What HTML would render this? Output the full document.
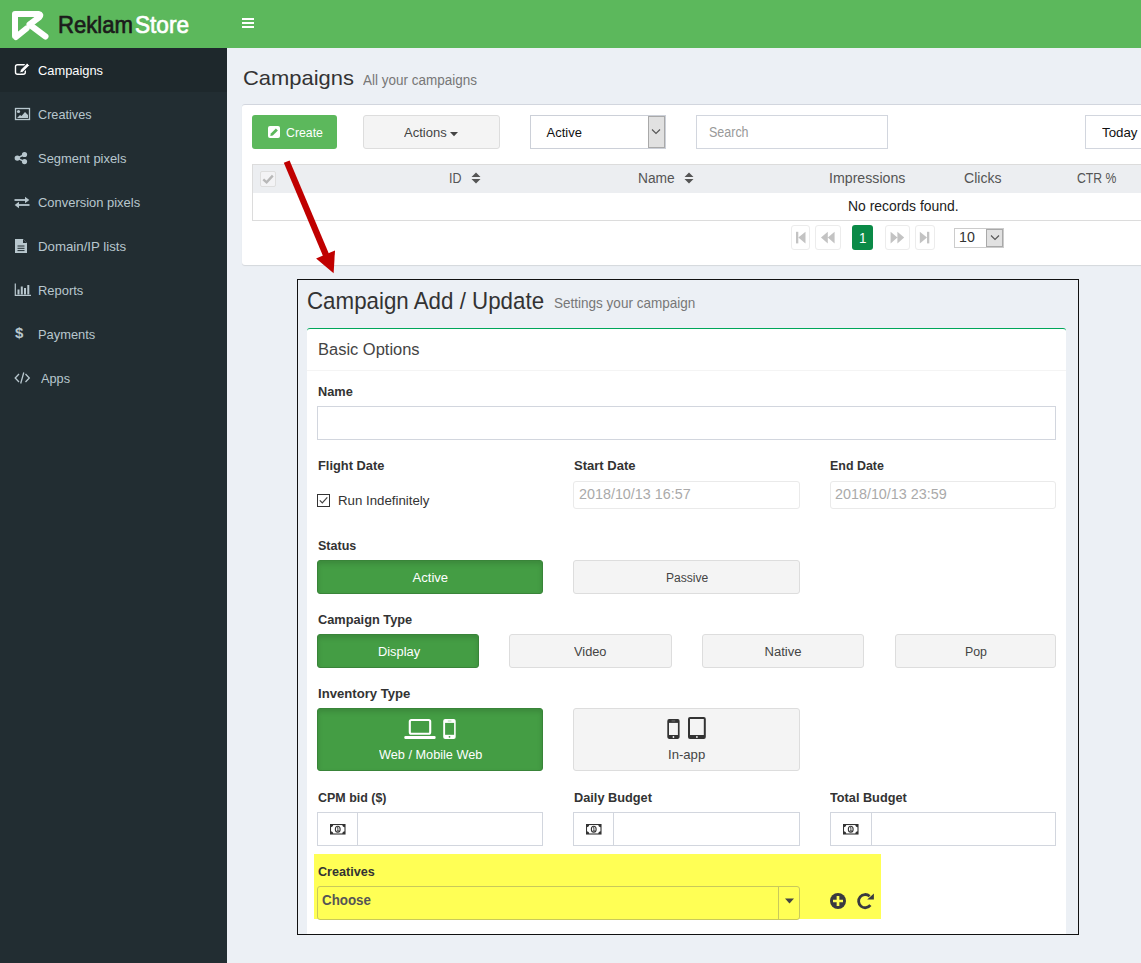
<!DOCTYPE html>
<html><head><meta charset="utf-8"><title>ReklamStore</title>
<style>
html,body{margin:0;padding:0;width:1141px;height:963px;overflow:hidden;background:#ecf0f5;font-family:"Liberation Sans",sans-serif;}
.b{position:absolute;}
.t{position:absolute;white-space:nowrap;transform-origin:0 0;}
</style></head><body>
<div class="b" style="left:0.00px;top:0.00px;width:1141.00px;height:48.00px;background:#5cb85c"></div>
<div class="b" style="left:0.00px;top:48.00px;width:227.00px;height:915.00px;background:#222d32"></div>
<div class="b" style="left:0.00px;top:48.00px;width:227.00px;height:44.00px;background:#1e282c"></div>
<div class="b" style="left:227.00px;top:48.00px;width:914.00px;height:915.00px;background:#ecf0f5"></div>
<svg class="b" style="left:10.00px;top:9.00px" width="40" height="32" viewBox="0 0 40 32"><path d="M5 27 L5 5 L28.5 5 Q31.5 5.5 29.5 8 L19.5 15.5 L35.5 27.5 M6 28 L16.5 19.5" stroke="#fff" stroke-width="6" stroke-linecap="round" stroke-linejoin="round" fill="none"/></svg>
<div class="t" style="left:57.50px;top:11.76px;font-size:24.13px;line-height:26.95px;color:#1b1b1b;transform:scaleX(0.9170);-webkit-text-stroke:0.7px #1b1b1b;">Reklam</div>
<div class="t" style="left:134.50px;top:11.76px;font-size:24.13px;line-height:26.95px;color:#fff;transform:scaleX(0.9363);-webkit-text-stroke:0.7px #fff;">Store</div>
<div class="b" style="left:242.00px;top:18.00px;width:12.00px;height:2.00px;background:#fff"></div>
<div class="b" style="left:242.00px;top:22.00px;width:12.00px;height:2.00px;background:#fff"></div>
<div class="b" style="left:242.00px;top:26.00px;width:12.00px;height:2.00px;background:#fff"></div>
<div class="t" style="left:38.00px;top:63.89px;font-size:12.94px;line-height:14.45px;color:#fff;transform:scaleX(0.9934);">Campaigns</div>
<div class="t" style="left:38.00px;top:107.89px;font-size:12.94px;line-height:14.45px;color:#b8c7ce;transform:scaleX(0.9792);">Creatives</div>
<div class="t" style="left:38.00px;top:151.89px;font-size:12.94px;line-height:14.45px;color:#b8c7ce;">Segment pixels</div>
<div class="t" style="left:38.00px;top:195.89px;font-size:12.94px;line-height:14.45px;color:#b8c7ce;">Conversion pixels</div>
<div class="t" style="left:38.00px;top:239.89px;font-size:12.94px;line-height:14.45px;color:#b8c7ce;transform:scaleX(1.0240);">Domain/IP lists</div>
<div class="t" style="left:38.00px;top:283.89px;font-size:12.94px;line-height:14.45px;color:#b8c7ce;">Reports</div>
<div class="t" style="left:38.00px;top:327.89px;font-size:12.94px;line-height:14.45px;color:#b8c7ce;transform:scaleX(0.9945);">Payments</div>
<div class="t" style="left:40.70px;top:371.89px;font-size:12.94px;line-height:14.45px;color:#b8c7ce;transform:scaleX(0.9835);">Apps</div>
<svg class="b" style="left:13.00px;top:62.00px" width="18" height="15" viewBox="0 0 18 15"><path d="M11.8 2.7 L4.5 2.7 Q2.5 2.7 2.5 4.7 L2.5 10.3 Q2.5 12.3 4.5 12.3 L10.3 12.3 Q12.3 12.3 12.3 10.3 L12.3 8.5" fill="none" stroke="#fff" stroke-width="1.4"/><path d="M6.6 11 L7.4 7.9 L14.2 1.1 L16.5 3.4 L9.7 10.2 Z" fill="#fff" stroke="#1e282c" stroke-width="0.9"/></svg>
<svg class="b" style="left:14.00px;top:107.00px" width="17" height="14" viewBox="0 0 17 14"><rect x="1.5" y="1.5" width="14" height="11" fill="none" stroke="#b8c7ce" stroke-width="1.3"/><circle cx="4.5" cy="4.5" r="1.6" fill="#b8c7ce"/><path d="M3 11 L6 8 L7.5 9 L11 5 L14 8 L14 11 Z" fill="#b8c7ce"/></svg>
<svg class="b" style="left:13.00px;top:151.00px" width="16" height="15" viewBox="0 0 16 15"><path d="M4.3 7.1 L11.5 3.5 M4.3 7.1 L11.5 10.6" stroke="#b8c7ce" stroke-width="1.6"/><circle cx="4.3" cy="7.1" r="2.7" fill="#b8c7ce"/><circle cx="11.5" cy="3.5" r="2.6" fill="#b8c7ce"/><circle cx="11.5" cy="10.6" r="2.6" fill="#b8c7ce"/></svg>
<svg class="b" style="left:14.00px;top:196.00px" width="17" height="13" viewBox="0 0 17 13"><path d="M0.5 4 L12 4" stroke="#b8c7ce" stroke-width="1.8"/><path d="M11 0.8 L15.3 4 L11 7.2 Z" fill="#b8c7ce"/><path d="M15.5 9 L4 9" stroke="#b8c7ce" stroke-width="1.8"/><path d="M5 5.8 L0.7 9 L5 12.2 Z" fill="#b8c7ce"/></svg>
<svg class="b" style="left:14.00px;top:238.00px" width="14" height="16" viewBox="0 0 14 16"><path d="M1 1 L9 1 L13 5 L13 15 L1 15 Z" fill="#b8c7ce"/><path d="M9 1 L9 5 L13 5" fill="#222d32"/><path d="M3.5 8 L10.5 8 M3.5 10.3 L10.5 10.3 M3.5 12.6 L10.5 12.6" stroke="#222d32" stroke-width="1"/></svg>
<svg class="b" style="left:14.00px;top:283.00px" width="18" height="14" viewBox="0 0 18 14"><path d="M1.3 0.5 L1.3 12.3 L17 12.3" stroke="#b8c7ce" stroke-width="1.2" fill="none"/><rect x="3.5" y="6.5" width="2" height="5" fill="#b8c7ce"/><rect x="6.8" y="3.5" width="2" height="8" fill="#b8c7ce"/><rect x="10" y="5" width="2" height="6.5" fill="#b8c7ce"/><rect x="13.3" y="2" width="2" height="9.5" fill="#b8c7ce"/></svg>
<div class="t" style="left:15px;top:323.8px;font-size:15px;line-height:18px;color:#b8c7ce;font-weight:bold">$</div>
<svg class="b" style="left:14.00px;top:371.00px" width="17" height="14" viewBox="0 0 17 14"><path d="M5 3 L1.2 7 L5 11 M11.5 3 L15.3 7 L11.5 11 M9.8 1.5 L6.7 12.5" stroke="#b8c7ce" stroke-width="1.3" fill="none"/></svg>
<div class="t" style="left:243.00px;top:66.32px;font-size:20.64px;line-height:23.05px;color:#333;transform:scaleX(1.0632);">Campaigns</div>
<div class="t" style="left:363.00px;top:70.74px;font-size:15.20px;line-height:16.98px;color:#777;transform:scaleX(0.8877);">All your campaigns</div>
<div class="b" style="left:242.00px;top:104.00px;width:903.00px;height:161.00px;box-sizing:border-box;background:#fff;border-top:1px solid #d2d6de;border-radius:3px;box-shadow:0 1px 1px rgba(0,0,0,0.1)"></div>
<div class="b" style="left:252.00px;top:115.00px;width:85.00px;height:34.00px;background:#5cb85c;border-radius:3px"></div>
<svg class="b" style="left:268.00px;top:126.00px" width="12" height="12" viewBox="0 0 12 12"><rect x="0" y="0" width="12" height="12" rx="2" fill="#fff"/><path d="M2.3 10 L2.8 7.6 L7.9 2.5 L9.9 4.5 L4.8 9.6 Z" fill="#5cb85c"/></svg>
<div class="t" style="left:286.30px;top:126.09px;font-size:12.94px;line-height:14.45px;color:#fff;transform:scaleX(0.9503);">Create</div>
<div class="b" style="left:363.00px;top:115.00px;width:137.00px;height:34.00px;background:#f4f4f4;border:1px solid #ddd;border-radius:3px;box-sizing:border-box"></div>
<div class="t" style="left:404.30px;top:126.12px;font-size:12.79px;line-height:14.29px;color:#444;transform:scaleX(1.0180);">Actions</div>
<svg class="b" style="left:450.00px;top:132.00px" width="8" height="4.5" viewBox="0 0 8 4.5"><path d="M0 0 L8 0 L4 4.3 Z" fill="#444"/></svg>
<div class="b" style="left:530.00px;top:115.00px;width:136.00px;height:34.00px;background:#fff;border:1px solid #ccd0d8;box-sizing:border-box"></div>
<div class="b" style="left:648.00px;top:116.00px;width:17.00px;height:32.00px;background:#e1e1e1;border:1px solid #a9a9a9;box-sizing:border-box"></div>
<svg class="b" style="left:651.00px;top:128.00px" width="10" height="7" viewBox="0 0 10 7"><path d="M1 1.5 L5 5.5 L9 1.5" stroke="#555" stroke-width="1.1" fill="none"/></svg>
<div class="t" style="left:546.60px;top:126.19px;font-size:12.94px;line-height:14.45px;color:#111;">Active</div>
<div class="b" style="left:696.00px;top:115.00px;width:192.00px;height:34.00px;background:#fff;border:1px solid #d2d6de;box-sizing:border-box"></div>
<div class="t" style="left:709.30px;top:125.05px;font-size:13.81px;line-height:15.42px;color:#999;transform:scaleX(0.9051);">Search</div>
<div class="b" style="left:1085.00px;top:115.00px;width:75.00px;height:34.00px;background:#fff;border:1px solid #d2d6de;box-sizing:border-box"></div>
<div class="t" style="left:1102.20px;top:125.70px;font-size:13.37px;line-height:14.94px;color:#111;transform:scaleX(0.9949);">Today</div>
<div class="b" style="left:252.00px;top:164.00px;width:908.00px;height:57.00px;border:1px solid #dcdcdc;box-sizing:border-box;background:#fff"></div>
<div class="b" style="left:253.00px;top:165.00px;width:907.00px;height:27.50px;background:#eceef1"></div>
<div class="b" style="left:260.00px;top:171.00px;width:16.00px;height:16.00px;background:#f3f3f5;border:1px solid #dedede;border-radius:2px;box-sizing:border-box"></div>
<svg class="b" style="left:262.00px;top:173.00px" width="12" height="12" viewBox="0 0 12 12"><path d="M1.3 6.3 L4.6 9.4 L10.8 2.6" stroke="#b8b8b8" stroke-width="2.4" fill="none"/></svg>
<div class="t" style="left:449.00px;top:171.37px;font-size:13.95px;line-height:15.59px;color:#555;transform:scaleX(0.8958);">ID</div>
<div class="t" style="left:637.50px;top:171.37px;font-size:13.95px;line-height:15.59px;color:#555;transform:scaleX(0.9887);">Name</div>
<div class="t" style="left:829.30px;top:171.37px;font-size:13.95px;line-height:15.59px;color:#555;transform:scaleX(1.0170);">Impressions</div>
<div class="t" style="left:963.50px;top:171.37px;font-size:13.95px;line-height:15.59px;color:#555;transform:scaleX(1.0079);">Clicks</div>
<div class="t" style="left:1076.90px;top:171.37px;font-size:13.95px;line-height:15.59px;color:#555;transform:scaleX(0.8763);">CTR %</div>
<svg class="b" style="left:471.30px;top:172.00px" width="10" height="12" viewBox="0 0 10 12"><path d="M0.5 5 L5 0.5 L9.5 5 Z M0.5 7 L5 11.5 L9.5 7 Z" fill="#555"/></svg>
<svg class="b" style="left:684.20px;top:172.00px" width="10" height="12" viewBox="0 0 10 12"><path d="M0.5 5 L5 0.5 L9.5 5 Z M0.5 7 L5 11.5 L9.5 7 Z" fill="#555"/></svg>
<div class="t" style="left:848.10px;top:199.24px;font-size:14.10px;line-height:15.75px;color:#212121;transform:scaleX(0.9869);">No records found.</div>
<div class="b" style="left:790.50px;top:225.00px;width:19.00px;height:24.50px;border:1px solid #ececec;border-radius:3px;box-sizing:border-box;background:#fff"></div>
<svg class="b" style="left:790.50px;top:225.00px" width="19" height="24.5" viewBox="0 0 19 24.5"><rect x="5" y="6.8" width="2.3" height="11.6" fill="#c3c3c3"/><path d="M14.5 6.8 L7.3 12.6 L14.5 18.4 Z" fill="#c3c3c3"/></svg>
<div class="b" style="left:815.30px;top:225.00px;width:25.30px;height:24.50px;border:1px solid #ececec;border-radius:3px;box-sizing:border-box;background:#fff"></div>
<svg class="b" style="left:815.30px;top:225.00px" width="25.3" height="24.5" viewBox="0 0 25.3 24.5"><path d="M12.8 6.8 L6 12.6 L12.8 18.4 Z M19.6 6.8 L12.8 12.6 L19.6 18.4 Z" fill="#c3c3c3"/></svg>
<div class="b" style="left:852.00px;top:225.00px;width:21.00px;height:24.50px;background:#0a8a47;border-radius:3px"></div>
<div class="t" style="left:858.50px;top:228.69px;font-size:15.26px;line-height:17.05px;color:#fff;transform:scaleX(0.8836);">1</div>
<div class="b" style="left:884.50px;top:225.00px;width:25.00px;height:24.50px;border:1px solid #ececec;border-radius:3px;box-sizing:border-box;background:#fff"></div>
<svg class="b" style="left:884.50px;top:225.00px" width="25" height="24.5" viewBox="0 0 25 24.5"><path d="M5.6 6.8 L12.4 12.6 L5.6 18.4 Z M12.4 6.8 L19.2 12.6 L12.4 18.4 Z" fill="#c3c3c3"/></svg>
<div class="b" style="left:915.30px;top:225.00px;width:19.30px;height:24.50px;border:1px solid #ececec;border-radius:3px;box-sizing:border-box;background:#fff"></div>
<svg class="b" style="left:915.30px;top:225.00px" width="19.3" height="24.5" viewBox="0 0 19.3 24.5"><path d="M4.8 6.8 L12 12.6 L4.8 18.4 Z" fill="#c3c3c3"/><rect x="12" y="6.8" width="2.3" height="11.6" fill="#c3c3c3"/></svg>
<div class="b" style="left:954.00px;top:227.50px;width:50.00px;height:20.50px;background:#fff;border:1px solid #ccc;box-sizing:border-box"></div>
<div class="b" style="left:986.00px;top:228.50px;width:17.00px;height:18.50px;background:#e1e1e1;border:1px solid #a9a9a9;box-sizing:border-box"></div>
<svg class="b" style="left:989.50px;top:233.50px" width="10" height="7" viewBox="0 0 10 7"><path d="M1 1.5 L5 5.5 L9 1.5" stroke="#555" stroke-width="1.1" fill="none"/></svg>
<div class="t" style="left:958.80px;top:228.49px;font-size:15.26px;line-height:17.05px;color:#333;transform:scaleX(0.9307);">10</div>
<svg class="b" style="left:270.00px;top:150.00px" width="80" height="130" viewBox="0 0 80 130"><path d="M16.7 11.6 L56 105" stroke="#c00000" stroke-width="6.3" fill="none"/><path d="M46.1 108.4 L65 100.4 L63.6 123.3 Z" fill="#c00000"/></svg>
<div class="b" style="left:297.00px;top:279.00px;width:782.30px;height:656.00px;border:1.7px solid #111;box-sizing:border-box;background:#ecf0f5"></div>
<div class="t" style="left:307.20px;top:288.15px;font-size:23.26px;line-height:25.98px;color:#333;transform:scaleX(0.9602);">Campaign Add / Update</div>
<div class="t" style="left:554.00px;top:295.18px;font-size:15.00px;line-height:16.75px;color:#777;transform:scaleX(0.9014);">Settings your campaign</div>
<div class="b" style="left:307.00px;top:328.00px;width:759.00px;height:605.30px;background:#fff;border-top:1.6px solid #00a65a;border-radius:3px 3px 0 0"></div>
<div class="b" style="left:307.00px;top:370.00px;width:759.00px;height:1.00px;background:#f4f4f4"></div>
<div class="t" style="left:317.70px;top:340.25px;font-size:17.30px;line-height:19.32px;color:#444;transform:scaleX(0.9530);">Basic Options</div>
<div class="t" style="left:317.70px;top:385.19px;font-size:12.94px;line-height:14.45px;color:#333;font-weight:bold;transform:scaleX(0.9877);">Name</div>
<div class="b" style="left:317.00px;top:406.00px;width:739.00px;height:34.00px;border:1px solid #d2d6de;box-sizing:border-box"></div>
<div class="t" style="left:317.60px;top:459.19px;font-size:12.94px;line-height:14.45px;color:#333;font-weight:bold;transform:scaleX(0.9935);">Flight Date</div>
<div class="t" style="left:573.60px;top:459.19px;font-size:12.94px;line-height:14.45px;color:#333;font-weight:bold;transform:scaleX(1.0081);">Start Date</div>
<div class="t" style="left:830.30px;top:459.19px;font-size:12.94px;line-height:14.45px;color:#333;font-weight:bold;transform:scaleX(0.9614);">End Date</div>
<div class="b" style="left:317.00px;top:494.00px;width:13.00px;height:13.00px;border:1px solid #333;box-sizing:border-box;background:#fff"></div>
<svg class="b" style="left:317.00px;top:494.00px" width="13" height="13" viewBox="0 0 13 13"><path d="M2.8 6.3 L5.3 8.9 L10.3 3.3" stroke="#444" stroke-width="1.2" fill="none"/></svg>
<div class="t" style="left:337.60px;top:494.06px;font-size:12.65px;line-height:14.12px;color:#333;transform:scaleX(1.0486);">Run Indefinitely</div>
<div class="b" style="left:573.00px;top:480.50px;width:227.00px;height:28.50px;border:1px solid #eaeaea;border-radius:3px;box-sizing:border-box"></div>
<div class="b" style="left:830.00px;top:480.50px;width:226.00px;height:28.50px;border:1px solid #eaeaea;border-radius:3px;box-sizing:border-box"></div>
<div class="t" style="left:578.60px;top:486.35px;font-size:14.53px;line-height:16.24px;color:#aaa;transform:scaleX(0.9880);">2018/10/13 16:57</div>
<div class="t" style="left:834.70px;top:485.85px;font-size:14.53px;line-height:16.24px;color:#aaa;transform:scaleX(0.9880);">2018/10/13 23:59</div>
<div class="t" style="left:317.70px;top:539.19px;font-size:12.94px;line-height:14.45px;color:#333;font-weight:bold;transform:scaleX(0.9687);">Status</div>
<div class="b" style="left:317.00px;top:560.00px;width:226.00px;height:34.00px;background:#449d44;border:1px solid #398439;box-sizing:border-box;border-radius:3px;box-shadow:inset 0 3px 5px rgba(0,0,0,0.125)"></div>
<div class="t" style="left:412.50px;top:571.16px;font-size:13.08px;line-height:14.61px;color:#fff;">Active</div>
<div class="b" style="left:573.00px;top:560.00px;width:227.00px;height:34.00px;background:#f4f4f4;border:1px solid #ddd;border-radius:3px;box-sizing:border-box"></div>
<div class="t" style="left:665.60px;top:571.16px;font-size:13.08px;line-height:14.61px;color:#444;transform:scaleX(0.9235);">Passive</div>
<div class="t" style="left:317.70px;top:613.19px;font-size:12.94px;line-height:14.45px;color:#333;font-weight:bold;transform:scaleX(0.9878);">Campaign Type</div>
<div class="b" style="left:317.00px;top:634.00px;width:162.00px;height:34.00px;background:#449d44;border:1px solid #398439;box-sizing:border-box;border-radius:3px;box-shadow:inset 0 3px 5px rgba(0,0,0,0.125)"></div>
<div class="t" style="left:377.50px;top:645.16px;font-size:13.08px;line-height:14.61px;color:#fff;transform:scaleX(0.9815);">Display</div>
<div class="b" style="left:509.00px;top:634.00px;width:163.00px;height:34.00px;background:#f4f4f4;border:1px solid #ddd;border-radius:3px;box-sizing:border-box"></div>
<div class="t" style="left:574.00px;top:645.16px;font-size:13.08px;line-height:14.61px;color:#444;transform:scaleX(0.9782);">Video</div>
<div class="b" style="left:702.00px;top:634.00px;width:162.00px;height:34.00px;background:#f4f4f4;border:1px solid #ddd;border-radius:3px;box-sizing:border-box"></div>
<div class="t" style="left:764.50px;top:645.16px;font-size:13.08px;line-height:14.61px;color:#444;">Native</div>
<div class="b" style="left:894.50px;top:634.00px;width:161.50px;height:34.00px;background:#f4f4f4;border:1px solid #ddd;border-radius:3px;box-sizing:border-box"></div>
<div class="t" style="left:964.50px;top:645.16px;font-size:13.08px;line-height:14.61px;color:#444;transform:scaleX(0.9452);">Pop</div>
<div class="t" style="left:317.70px;top:687.19px;font-size:12.94px;line-height:14.45px;color:#333;font-weight:bold;transform:scaleX(1.0148);">Inventory Type</div>
<div class="b" style="left:317.00px;top:708.00px;width:226.00px;height:63.00px;background:#449d44;border:1px solid #398439;box-sizing:border-box;border-radius:3px;box-shadow:inset 0 3px 5px rgba(0,0,0,0.125)"></div>
<svg class="b" style="left:404.00px;top:718.00px" width="54" height="22" viewBox="0 0 54 22"><rect x="5.8" y="2.05" width="20.4" height="13.7" rx="1.5" fill="none" stroke="#fff" stroke-width="2.1"/><rect x="0.3" y="17.9" width="31.3" height="3" rx="1.2" fill="#fff"/><rect x="39.2" y="1" width="12.5" height="19.9" rx="2" fill="#fff"/><rect x="41.1" y="4.9" width="9" height="11.9" fill="#449d44"/><rect x="43.8" y="2.6" width="3.6" height="0.8" fill="#9bcf9b"/><circle cx="45.5" cy="18.8" r="0.9" fill="#449d44"/></svg>
<div class="t" style="left:378.60px;top:747.83px;font-size:13.23px;line-height:14.77px;color:#fff;transform:scaleX(0.9612);">Web / Mobile Web</div>
<div class="b" style="left:573.00px;top:708.00px;width:227.00px;height:63.00px;background:#f4f4f4;border:1px solid #ddd;border-radius:3px;box-sizing:border-box"></div>
<svg class="b" style="left:666.00px;top:716.00px" width="41" height="24" viewBox="0 0 41 24"><rect x="1.3" y="3.1" width="12.3" height="19.8" rx="1.8" fill="#333"/><rect x="3" y="6.9" width="8.9" height="12.1" fill="#f4f4f4"/><rect x="5.6" y="4.6" width="3.6" height="0.7" fill="#888"/><circle cx="7.45" cy="21" r="0.9" fill="#f4f4f4"/><rect x="22" y="1" width="17.8" height="21.9" rx="2" fill="#333"/><rect x="24" y="3" width="13.8" height="16" fill="#f4f4f4"/><circle cx="30.9" cy="21" r="0.9" fill="#f4f4f4"/></svg>
<div class="t" style="left:668.00px;top:747.89px;font-size:12.94px;line-height:14.45px;color:#444;transform:scaleX(1.0142);">In-app</div>
<div class="t" style="left:317.50px;top:791.19px;font-size:12.94px;line-height:14.45px;color:#333;font-weight:bold;transform:scaleX(0.9628);">CPM bid ($)</div>
<div class="t" style="left:573.60px;top:791.19px;font-size:12.94px;line-height:14.45px;color:#333;font-weight:bold;transform:scaleX(0.9853);">Daily Budget</div>
<div class="t" style="left:830.40px;top:791.19px;font-size:12.94px;line-height:14.45px;color:#333;font-weight:bold;transform:scaleX(0.9822);">Total Budget</div>
<div class="b" style="left:317.00px;top:812.30px;width:226.00px;height:33.30px;border:1px solid #d2d6de;box-sizing:border-box"></div>
<div class="b" style="left:357.00px;top:812.30px;width:1.00px;height:33.30px;background:#d2d6de"></div>
<svg class="b" style="left:330.00px;top:823.60px" width="16" height="11" viewBox="0 0 16 11"><rect x="0.5" y="0.5" width="14.5" height="9.5" fill="none" stroke="#333" stroke-width="1.1"/><path d="M0.5 0.5 L3.2 0.5 A2.7 2.7 0 0 1 0.5 3.2 Z M15 0.5 L12.3 0.5 A2.7 2.7 0 0 0 15 3.2 Z M0.5 10 L3.2 10 A2.7 2.7 0 0 0 0.5 7.3 Z M15 10 L12.3 10 A2.7 2.7 0 0 1 15 7.3 Z" fill="#333"/><ellipse cx="7.75" cy="5.25" rx="2.4" ry="3" fill="none" stroke="#333" stroke-width="1.1"/><path d="M7.1 4 L7.9 3.4 L7.9 7 M6.9 7 L9 7" stroke="#333" stroke-width="0.9" fill="none"/></svg>
<div class="b" style="left:573.00px;top:812.30px;width:227.00px;height:33.30px;border:1px solid #d2d6de;box-sizing:border-box"></div>
<div class="b" style="left:613.00px;top:812.30px;width:1.00px;height:33.30px;background:#d2d6de"></div>
<svg class="b" style="left:586.00px;top:823.60px" width="16" height="11" viewBox="0 0 16 11"><rect x="0.5" y="0.5" width="14.5" height="9.5" fill="none" stroke="#333" stroke-width="1.1"/><path d="M0.5 0.5 L3.2 0.5 A2.7 2.7 0 0 1 0.5 3.2 Z M15 0.5 L12.3 0.5 A2.7 2.7 0 0 0 15 3.2 Z M0.5 10 L3.2 10 A2.7 2.7 0 0 0 0.5 7.3 Z M15 10 L12.3 10 A2.7 2.7 0 0 1 15 7.3 Z" fill="#333"/><ellipse cx="7.75" cy="5.25" rx="2.4" ry="3" fill="none" stroke="#333" stroke-width="1.1"/><path d="M7.1 4 L7.9 3.4 L7.9 7 M6.9 7 L9 7" stroke="#333" stroke-width="0.9" fill="none"/></svg>
<div class="b" style="left:830.00px;top:812.30px;width:226.00px;height:33.30px;border:1px solid #d2d6de;box-sizing:border-box"></div>
<div class="b" style="left:870.50px;top:812.30px;width:1.00px;height:33.30px;background:#d2d6de"></div>
<svg class="b" style="left:842.50px;top:823.60px" width="16" height="11" viewBox="0 0 16 11"><rect x="0.5" y="0.5" width="14.5" height="9.5" fill="none" stroke="#333" stroke-width="1.1"/><path d="M0.5 0.5 L3.2 0.5 A2.7 2.7 0 0 1 0.5 3.2 Z M15 0.5 L12.3 0.5 A2.7 2.7 0 0 0 15 3.2 Z M0.5 10 L3.2 10 A2.7 2.7 0 0 0 0.5 7.3 Z M15 10 L12.3 10 A2.7 2.7 0 0 1 15 7.3 Z" fill="#333"/><ellipse cx="7.75" cy="5.25" rx="2.4" ry="3" fill="none" stroke="#333" stroke-width="1.1"/><path d="M7.1 4 L7.9 3.4 L7.9 7 M6.9 7 L9 7" stroke="#333" stroke-width="0.9" fill="none"/></svg>
<div class="b" style="left:314.00px;top:854.00px;width:567.00px;height:65.00px;background:#ffff55"></div>
<div class="t" style="left:317.60px;top:865.19px;font-size:12.94px;line-height:14.45px;color:#333;font-weight:bold;transform:scaleX(0.9751);">Creatives</div>
<div class="b" style="left:317.00px;top:886.00px;width:483.00px;height:33.50px;border:1px solid #c9c95a;border-radius:3px;box-sizing:border-box"></div>
<div class="b" style="left:778.00px;top:887.00px;width:1.00px;height:32.00px;background:#c9c95a"></div>
<svg class="b" style="left:785.00px;top:897.50px" width="10" height="6" viewBox="0 0 10 6"><path d="M0 0.5 L9 0.5 L4.5 5.5 Z" fill="#444"/></svg>
<div class="t" style="left:322.00px;top:892.71px;font-size:14.24px;line-height:15.91px;color:#555;font-weight:bold;transform:scaleX(0.9381);">Choose</div>
<svg class="b" style="left:830.00px;top:893.00px" width="17" height="17" viewBox="0 0 17 17"><circle cx="8" cy="8" r="8" fill="#3a3a40"/><path d="M8 3 L8 13 M3 8 L13 8" stroke="#ffff55" stroke-width="2.7"/></svg>
<svg class="b" style="left:856.00px;top:892.00px" width="20" height="18" viewBox="0 0 20 18"><path d="M13.6 4.2 A6.6 6.6 0 1 0 14.4 13.2" stroke="#3a3a40" stroke-width="2.8" fill="none"/><path d="M11.2 7.6 L17.9 7.6 L17.9 1.4 Z" fill="#3a3a40"/></svg>
</body></html>
